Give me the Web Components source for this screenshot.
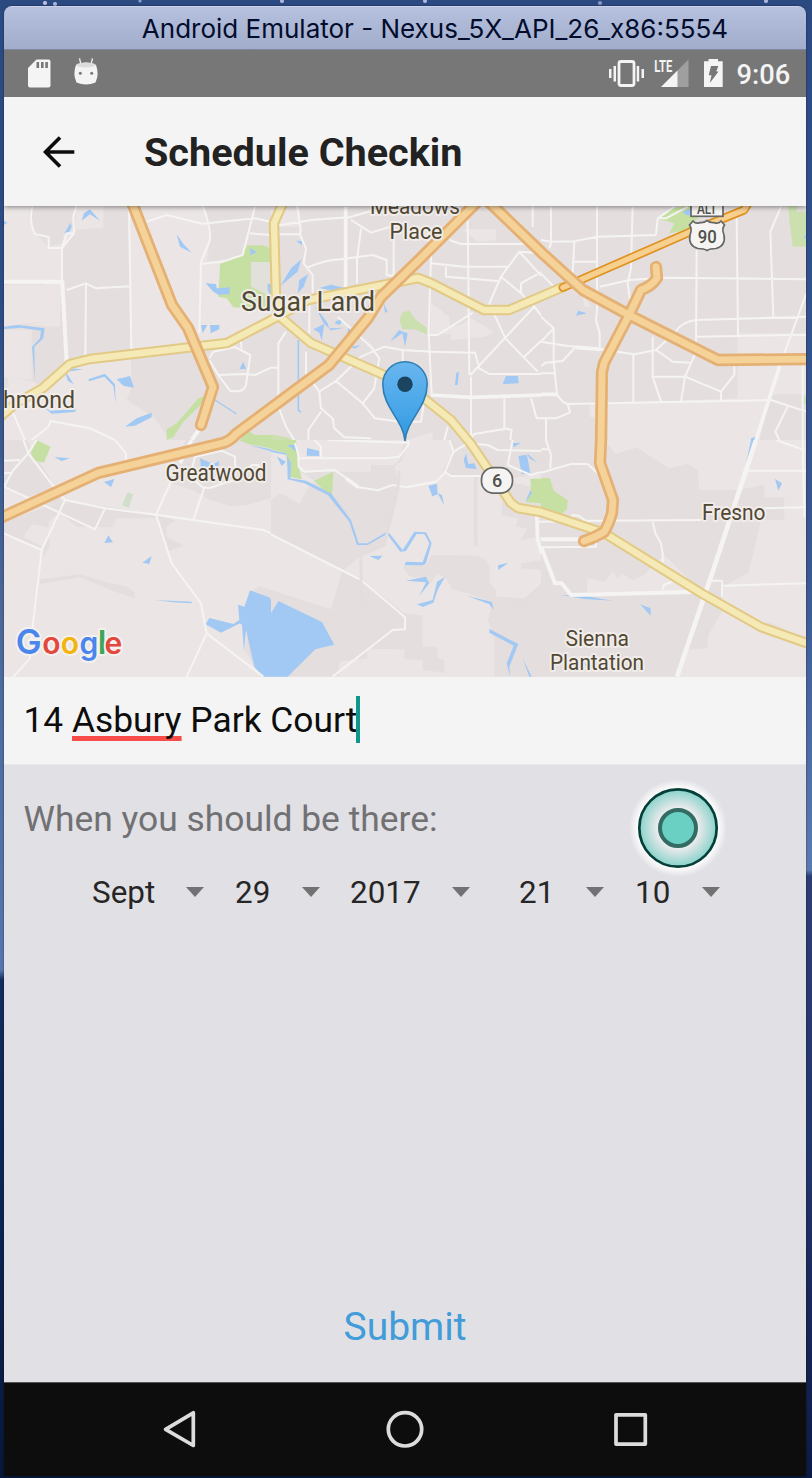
<!DOCTYPE html>
<html lang="en">
<head>
<meta charset="utf-8">
<title>Schedule Checkin</title>
<style>
html,body{margin:0;height:1478px;overflow:hidden}
body{font-family:Roboto,"Liberation Sans",sans-serif}
</style>
</head>
<body>
<emulator-desktop>
  <emulator-window label="Android Emulator - Nexus_5X_API_26_x86:5554">
    <status-bar time="9:06"></status-bar>
    <app-header>Schedule Checkin</app-header>
    <location-map></location-map>
    <address-field><span>14</span> <u>Asbury</u> <span>Park Court</span></address-field>
    <checkin-form>
      <span slot="label">When you should be there:</span>
      <date-spinner style="width:112px">Sept</date-spinner>
      <date-spinner style="width:85px;margin-left:31px">29</date-spinner>
      <date-spinner style="width:120px;margin-left:30px">2017</date-spinner>
      <date-spinner style="width:85px;margin-left:49px">21</date-spinner>
      <date-spinner style="width:85px;margin-left:31px">10</date-spinner>
      <span slot="action">Submit</span>
    </checkin-form>
    <nav-bar></nav-bar>
  </emulator-window>
</emulator-desktop>
<script>
function define(name, html, setup) {
  customElements.define(name, class extends HTMLElement {
    constructor() {
      super();
      this.attachShadow({mode: 'open'}).innerHTML = html;
    }
    connectedCallback() { if (setup) setup(this, this.shadowRoot); }
  });
}

define('emulator-desktop', `<style>
:host{display:block;box-sizing:border-box;width:812px;height:1478px;padding:6px 6px 2px 4px;
background:
radial-gradient(circle at 45px 3px,#c0bfe0 0 1.5px,transparent 2.5px),
radial-gradient(circle at 55px 4px,#b0b5dc 0 1.5px,transparent 2.5px),
radial-gradient(circle at 140px 1px,#8f9fd0 0 1px,transparent 2px),
radial-gradient(circle at 282px 1px,#b0b5dc 0 1.5px,transparent 2.5px),
radial-gradient(circle at 425px 1px,#b0b5dc 0 1.5px,transparent 2.5px),
radial-gradient(circle at 600px 3px,#8795c5 0 1.5px,transparent 2.5px),
radial-gradient(circle at 766px 1px,#b0b5dc 0 1.5px,transparent 2.5px),
linear-gradient(180deg,#2b4a82 0,#3a5790 560px,#5b7bb0 870px,#2c3d72 876px,#23366a 1150px,#0c1b42 1478px) right/10px 100% no-repeat,
linear-gradient(180deg,#2b4a82 0,#2d4c84 300px,#4b6798 600px,#5577ae 970px,#142c5e 980px,#0c2350 1250px,#08183a 1478px)}
</style><slot></slot>`);

define('emulator-window', `<style>
:host{display:flex;flex-direction:column;height:1470px;border-radius:8px 8px 0 0;overflow:hidden;box-shadow:0 0 2px rgba(0,0,20,.6)}
.title{box-sizing:border-box;height:44px;flex:none;background:linear-gradient(#b5c1de,#a1adca);border-top:1px solid #ccd3e6;border-bottom:1px solid #7c869f;
font:26px/44px Inter,sans-serif;letter-spacing:0;color:#020c2c;text-align:center;white-space:nowrap;padding-left:60px}
</style><div class="title"></div><slot></slot>`,
(host, root) => root.querySelector('.title').textContent = host.getAttribute('label'));

define('status-bar', `<style>
:host{display:flex;align-items:center;height:47px;flex:none;background:#777;color:#f4f4f4}
svg{display:block}
.time{font:500 27.3px/47px Roboto,sans-serif;margin:4px 0 0 13.500px}
</style>
<svg width="733" height="47" viewBox="4 50 719 47" preserveAspectRatio="none" style="width:719px">
<path fill="#f4f4f4" d="M36.500 59.500H48.500Q50.500 59.500 50.500 61.500V85.500Q50.500 87.500 48.500 87.500H30Q28 87.500 28 85.500V68Z"/>
<path fill="#777" d="M36.500 62h2.600v6h-2.600zM41 62h2.600v6H41zM45.300 62h2.600v6h-2.600z"/>
<path stroke="#f4f4f4" stroke-width="1.300" fill="none" d="M79.500 58.300l1.500 6M92.500 58.300l-1.500 6"/>
<path fill="#f4f4f4" d="M76 65Q86 60 96 65Q99.500 74 95.500 82.500Q86 86.500 76.500 82.500Q72.500 74 76 65Z"/>
<ellipse cx="86" cy="65" rx="9.700" ry="2.400" fill="#ddd"/>
<circle cx="80.300" cy="73.300" r="1.500" fill="#777"/><circle cx="91.700" cy="73.300" r="1.500" fill="#777"/>
<rect x="619" y="61.500" width="15" height="24" rx="2" fill="none" stroke="#f4f4f4" stroke-width="2.800"/>
<path fill="#f4f4f4" d="M609 69h2.500v9H609zM613.500 66h2.500v15.500h-2.500zM636.700 66h2.500v15.500h-2.500zM641.500 69h2.500v9h-2.500z"/>
<path fill="#9f9f9f" d="M688.500 59.500V87H661Z"/><path fill="#f4f4f4" d="M677.500 70.500V87H661Z"/>
<path d="M653 58H673.500V68L669.500 72H653Z" fill="#777"/>
<text x="654.300" y="71.500" font-family="Roboto" font-weight="700" font-size="16" textLength="18" lengthAdjust="spacingAndGlyphs" fill="#f4f4f4">LTE</text>
<path fill="#f4f4f4" d="M708.500 59h9.500v2.300h4.700V87H704V61.300h4.500Z"/>
<path fill="#777" d="M711 66h7.300l-2 5.500h2.300L709.800 83l1.700-7.800h-2.800Z"/>
</svg><div class="time"></div>`,
(host, root) => root.querySelector('.time').textContent = host.getAttribute('time'));

define('app-header', `<style>
:host{display:flex;align-items:center;height:109px;flex:none;background:#f4f4f4;color:#222;position:relative;z-index:2;box-shadow:0 1px 5px rgba(0,0,0,.45);clip-path:inset(0 0 -8px 0)}
svg{display:block;margin:0 69px 0 39px;flex:none}
div{font:700 39.600px/46px Roboto,sans-serif;margin-top:3px;white-space:nowrap}
</style>
<svg width="32" height="32" viewBox="43 135.500 32 32"><path d="M74.300 151.500H45.500M60 137L45.500 151.500L60 166" fill="none" stroke="#0c0c0c" stroke-width="3.600"/></svg>
<div><slot></slot></div>`);

define('location-map', `<style>
:host{display:block;height:471px;flex:none}
svg{display:block}
.urban{fill:#e4dfde}.park{fill:#c6e0a3}.water{fill:#a2c9f4}.land{fill:#ebe6e5}
.wl{fill:none;stroke:#a2c9f4;stroke-width:7}
.rd{fill:none;stroke:#f5f4f3;stroke-width:6;stroke-linejoin:round}
.labels text{font-family:Roboto,sans-serif;fill:#504833;stroke:#f3eeec;stroke-opacity:.9;stroke-width:4px;stroke-linejoin:round;paint-order:stroke}
</style>
<svg width="802" height="471" viewBox="4 206 802 471">
<defs>
<linearGradient id="pin" x1="0" y1="0" x2="0" y2="1"><stop offset="0" stop-color="#69b6ef"/><stop offset=".65" stop-color="#45a5e8"/><stop offset="1" stop-color="#2c96dd"/></linearGradient>
<path id="oa" d="M131 200L172 305L188 328L213 387L201 425M0 518L98 473L223 443Q230 441 236 434L271 408L329 365L368 318L381 297L424 255L478 201M487 200L542 253L574 282L583 290L629 315L718 360L812 359M656 267L657 278Q652 286 641 290L629 315L604 363L602 372L601 440L600 463L613 500L612 513Q609 524 604 532Q594 538 584 541"/>
<path id="ye" d="M0 417L15 404L43 388L70 364L90 359L227 343L279 316L308 300L418 278L431 283L484 310L509 310L563 287M283 203L274 223L276 297L279 316L311 343L384 375L426 400L451 420L471 444L511 503L518 508L541 512L604 533L701 593L761 627L812 645"/>
<path id="or" d="M563 287.500L690 232L744 210L750 200"/>
<clipPath id="tl"><path d="M0 0H814V721H0Z"/></clipPath>
</defs>
<rect x="4" y="206" width="802" height="471" fill="#ebe6e5"/>
<g transform="translate(0 200) scale(.33333)" clip-path="url(#tl)">
<path class="urban" d="M90 0H230L225 90L190 100V130L145 140L105 100L88 50ZM230 90L275 85L310 85V0H390V265L395 455L235 480L200 485L130 560L100 545L25 530V580L12 600V250H130L125 285L172 320L160 362L80 375L180 380L185 150ZM392 460L570 440L660 440L813 370V720H510L460 650L380 600L395 560ZM610 0H813V140L730 160L700 180L620 185L630 120Z"/>
<path class="land" d="M12 255H130L125 285L172 320L160 362L12 378ZM12 390H95V540L12 530Z"/>
<path class="park" d="M660 192L728 165L742 136H790L813 145V330L700 322L680 295L655 290ZM500 720V688L530 670L595 595L615 587L612 605L550 665L520 712ZM720 720L745 692L765 705H813V720Z"/>
<path fill="#e2e0da" d="M753 186H813V290L753 260Z"/>
<path class="water" d="M245 62L252 40L270 28L300 62L270 43ZM193 100L212 68L215 80L205 103ZM530 103L551 133L575 158L540 140ZM617 250L648 252L650 265L690 262L688 283L655 284L640 275ZM603 375H622L608 400ZM630 375H658V388L632 400ZM719 507L729 485L739 507ZM750 143L770 157L751 166ZM803 250L813 255V290L803 270ZM194 510L221 553L203 542ZM350 538L390 528L402 563L370 557ZM375 680L410 655L455 638V652L405 677ZM12 62L22 69L12 74ZM12 380L55 375L134 385L130 415L103 440L105 545L96 440L120 415L123 392L65 383L12 387ZM265 538L315 521L345 553L347 610L340 558L313 530L268 544ZM205 505L250 508L210 514ZM105 600L150 632L228 628L234 615L225 636L155 641Z"/>
<path class="wl" style="stroke-width:4" d="M645 600L710 642"/>
<path class="rd" d="M98 15Q85 60 105 102L146 111V144H186L222 100L220 50L230 15M186 144V240M222 100H200L187 140M200 270L258 250L288 265L390 259M258 250L256 470M387 20L394 455M440 65L500 45L607 71L765 55L813 66M607 15Q632 75 630 120L603 185L598 400M603 192L670 184L728 165L765 20M750 100L813 105M628 475L640 455L705 441L751 465L738 555Q731 580 690 572L655 525L628 480M655 525L735 522L765 525L813 503M720 400L725 445M12 635L95 610M35 630L75 720M95 720L145 680L152 663L270 685L345 720"/>
<path class="rd" style="stroke-width:12" d="M12 245H187L200 490M603 680L575 720"/>
</g>
<g transform="translate(271 200) scale(.33333)" clip-path="url(#tl)">
<path class="urban" d="M0 0H813V720H0Z"/>
<path class="land" d="M575 88H675V120L620 125ZM480 310L535 350V380L570 375L600 355L668 395L640 410L540 420V400L478 405ZM410 720L485 697V720ZM0 30H85V80H0Z"/>
<path class="park" fill-opacity=".8" d="M385 360L395 337L415 332L430 355L468 385V403L430 388H395ZM0 703L60 715V720H0Z"/>
<path class="water" d="M75 122L93 123V136ZM28 258L60 205L91 178L80 215ZM80 280L85 240L112 222L98 260ZM145 264L180 254L218 263L188 272ZM127 388L160 372L152 422L145 398ZM190 370L200 361L217 360L205 375ZM357 425L383 391L410 400L402 440L394 400ZM552 555L556 518L564 516L560 555ZM705 528H741L743 550L695 552ZM225 415L233 383L245 390L232 418ZM338 310L350 335L342 338ZM130 315L170 370L175 385L222 383L180 391L158 370ZM240 440L270 436L250 446Z"/>
<path class="wl" style="stroke-width:5" d="M82 420V630L90 637"/>
<path class="rd" d="M0 80L120 60L235 52L310 30M78 15L88 80V107L105 145L98 190L125 225V290M0 103H85M240 60L300 98L360 80M270 85L258 180V250M105 205Q160 180 210 178L305 165L347 180V225L368 228V80M480 190L580 200H710M525 200V230L680 243M535 120L570 132H740L780 130M590 60L595 525M470 100L480 170L473 400L482 585M115 300V400M45 395L22 430V620L45 680L70 720M0 503H22M105 455V520L145 575L150 625L190 660M145 575L195 543L240 500L270 470L340 440L395 450L480 455L612 458L625 505L655 522H813M200 350L300 440L325 475L318 515L310 565L275 610M195 543L275 610L312 655L385 665L450 665L460 600M185 655L190 685L220 712L300 715M473 405H500L605 338M813 160L745 155L690 230L655 310L703 415L800 515M745 155L813 230M813 215L750 250V280L790 320L598 525M790 320L813 350M690 230L750 280M760 470L813 420M785 0V80M700 595V685L722 690L718 720M700 687L610 702L595 720M780 595L797 655H813M600 530V720M112 720V690L150 635M395 450V490M530 680L520 720"/>
<path class="rd" style="stroke-width:11" d="M224 20V262M480 585L600 592L813 585"/>
</g>
<g transform="translate(541 200) scale(.33333)" clip-path="url(#tl)">
<path class="urban" d="M0 0H796V400H590V595L200 610V720H0Z"/><path class="land" d="M125 280L150 320H130ZM145 615H170V650H145Z"/>
<path class="urban" d="M690 583H796V720H655Z"/>
<path class="park" d="M345 55L395 25L450 15L500 20L440 90L385 100L400 70Z"/><path class="park" fill-opacity=".8" d="M742 18H770L765 35H796V140H755L745 60ZM788 590H796V612H788Z"/>
<path class="water" d="M425 35L450 25V48L435 45ZM105 347L112 332L138 340ZM788 115L796 100V115ZM630 715L642 710V720H630Z"/>
<path class="rd" d="M30 20V130L25 145M0 120L30 125L100 124L170 110L345 105M100 124L95 220M95 185H170M168 20V330L165 360L176 400V450M275 20L270 205L260 250L267 300M345 105L350 55L400 20M350 55H375L440 20M176 260L265 240L365 233L796 238M0 220L40 262M0 350L38 385V480L48 585L65 605L80 612L275 608L690 600L796 635M38 385L0 425M0 425L80 438L110 440L180 448L280 463L345 450L400 400Q420 365 465 360L796 350M0 498L15 488L65 483L105 440M0 520H45M80 612L87 637L45 655H0M15 655V720M277 463V605M335 410V530L360 605M345 450L395 485L450 488M335 530H432L540 575L580 525V485M540 575V600M470 445L432 530L420 605M467 150L465 425M465 410L740 405L796 405M587 50L591 405M720 20L688 95L697 350M796 280L730 460M740 620L703 695L715 720M785 490V720"/>
<path class="rd" style="stroke-width:11" d="M725 470L645 720M0 583H45M105 442L180 448"/>
</g>
<g transform="translate(0 440) scale(.33333)" clip-path="url(#tl)">
<path class="urban" d="M12 0H80L165 140H200L110 190L130 200L195 180L450 220L525 240L500 260V290L552 317L507 333L475 235L350 235L335 262L230 260L180 220L145 245L150 320L130 350V328L12 285V245L180 185V160L140 150L75 175L12 140ZM120 418L240 403L340 432Q380 432 405 458V475L330 450L240 412L120 432ZM700 0H813V175L740 195L690 198L630 180L580 150L510 130L520 60L560 0ZM735 630L760 450L780 438L813 450V710H780ZM30 85L95 80L85 108Z"/>
<path class="land" d="M95 253L165 265L125 320L70 290Z"/>
<path class="park" d="M92 38L110 0L152 20L132 68L105 62ZM715 0H813V25L745 12Z"/><path class="park" style="fill:#cfdfc9" d="M366 196L383 157L400 163L386 203Z"/>
<path class="water" d="M163 51L210 55L185 63ZM312 126L344 116L333 142ZM313 309L325 286L339 307ZM427 368L455 348L448 372ZM600 55L640 72L658 62L655 82H603ZM617 553L628 534L700 552L718 540L714 494L733 500L750 451L808 472L813 480V710H790L763 680L738 570L732 635L726 555L720 550L663 578ZM465 480L575 485V490L520 487ZM745 15L813 28V34Z"/>
<path class="rd" d="M70 0L85 40L165 145L195 180M85 40L40 90L12 140L140 200L285 268L315 205M12 62L60 60M12 100L35 98M85 40L110 0M195 180L315 205L468 224L580 240L790 270L813 280M195 180L125 330L98 560L90 655L40 710M12 280L125 330M345 0L378 40V60M515 120L468 224L515 370L603 490L620 580L560 710M620 580L790 710M580 240L612 145L570 110L585 50L665 32L705 50V120L655 135Q620 150 612 140M735 100L755 75H775L790 110"/>
<path class="rd" style="stroke-width:11" d="M575 0L540 70"/>
</g>
<g transform="translate(271 440) scale(.33333)" clip-path="url(#tl)">
<path class="urban" d="M0 0H410L395 60L370 80L385 130L350 260L340 315L285 345L268 500V415L375 500L400 520L455 525V620H500V650L520 660V700L510 683L455 690V660H400V628H290V655L205 665V710H0V450L180 508L213 395L0 280V180L30 160L85 192L110 145L130 122L90 95H300V75H370L385 60L400 0ZM530 0H813V150L760 135L620 110V320L608 318V110L530 105L515 90L550 30ZM480 345L620 347L645 360L655 380L657 430L675 450V470L760 475L813 430V710H670V600L650 540L665 490L590 460L545 450L525 415L500 400L480 430L410 405L395 380L470 370ZM690 225L740 235L735 260L770 265L750 300L813 290V360L750 370V385L813 390V100L700 120Z"/>
<path class="land" d="M0 283L213 395L270 345L360 320L400 335L395 380L440 450L525 415L545 450L590 460L665 490L650 540L670 600L650 710H205V665L290 655V628H400L455 625L455 525L400 520L280 415L213 395L0 290ZM395 50L420 30L435 0L490 15V80L460 110H400Z"/>
<path class="urban" d="M370 545L450 525L455 620H500V655L520 660V698L455 690V660L400 658V628L290 625L330 600Z"/>
<path class="park" d="M0 0H75L80 60L92 118L55 110L45 40L0 28ZM130 122L187 95L183 167L160 152ZM778 116H813V190L765 186L780 150Z"/>
<path class="water" d="M0 30L45 40L60 70L58 115L105 122L180 160L240 240L263 310L290 310L350 274L395 330L430 275L465 277L482 310L465 370L455 376L400 376L405 365L455 367L475 310L460 282L437 282L405 333L388 335L348 282L290 315L258 315L235 245L170 165L100 130L50 118L48 45L0 36ZM18 50L45 65L32 78ZM108 24L144 32L145 48L107 47ZM48 15H77V35ZM472 137L498 131L500 163L484 169ZM500 160L513 165L519 195ZM578 60L585 40L592 72L610 70L617 88L585 84ZM742 48L768 44L778 100L752 102ZM725 10L750 8L728 22ZM295 348L335 347L322 360ZM405 422L465 410L475 430L445 468L465 427ZM485 480L498 425L522 411L500 450L487 488L455 501L438 493ZM681 376L712 368L682 390ZM588 467L663 486L668 510L655 493ZM655 567L742 612L715 680L717 710L707 670L728 617L655 578ZM755 655L782 710H775ZM768 40L800 68L775 55ZM0 520L22 483L153 546L190 614L133 628L65 695L50 710H0ZM762 188L778 150L783 158Z"/>
<path class="rd" d="M72 10L82 45L83 80L100 95L190 90L235 120L262 142L320 151L365 135L405 142L495 125L520 100L548 35L535 0M83 55L345 55L385 50L412 15V0M130 0L150 20V50M170 0L410 8M548 35L590 10L650 15L680 30L813 33M520 95L540 108H630M725 0L710 75L780 105L813 95M0 283L270 420L402 532V568L365 570L185 710M800 245H813"/>
<path fill="none" stroke="#e3dedc" stroke-width="9" d="M385 90L380 150L340 315L270 345V500M725 495L760 485L813 435"/>
<path class="rd" style="stroke-width:11" d="M797 220L800 300L813 340M225 115L262 142"/>
</g>
<g transform="translate(541 440) scale(.33333)" clip-path="url(#tl)">
<path class="urban" d="M0 0H190L225 42L285 22L385 85L440 72L470 90L475 150H590L670 135V170L780 175V240H660L620 410L545 440V510L500 590V625L440 630L410 710H0ZM670 550L705 545L730 560L750 535H796V600Z"/>
<path class="land" d="M138 415L190 425L215 395L230 415L242 400L275 420L305 408L370 345L480 455L138 455ZM545 440L620 400L796 390V600L545 480ZM730 145L780 110V240H730Z"/>
<path class="park" d="M0 114H27L38 152L80 180L78 208L62 222L0 205Z"/>
<path class="water" d="M613 80L630 0H640L622 70ZM702 117L723 130L712 152ZM297 493L329 505V527ZM58 465L130 467L215 482L130 477ZM125 668L165 678L145 688Z"/>
<path class="rd" d="M15 0L30 45L28 85M0 28H25M0 98L90 72H140L170 100M0 245L90 243L480 240M90 243L95 225L115 228L145 250M0 322L165 320V290M335 245L343 280L360 310L365 340V365M365 450L368 435L430 410M620 92H796M670 205L796 202M705 0L790 30M785 0L790 230M545 437L796 430M500 422H543V470"/>
<path class="rd" style="stroke-width:14" d="M645 0L520 380L408 710"/>
<path class="rd" style="stroke-width:12" d="M0 298H130M0 320L42 430H62L90 465L480 455"/>
</g>
<g fill="none" stroke-linejoin="round" stroke-linecap="round">
<use href="#ye" stroke="#e2ca86" stroke-width="10.500"/><use href="#ye" stroke="#f5e9b6" stroke-width="6.400"/>
<use href="#or" stroke="#df921f" stroke-width="9"/><use href="#or" stroke="#f7d08f" stroke-width="5.600"/>
<use href="#oa" stroke="#e5b073" stroke-width="12.300"/><use href="#oa" stroke="#f4d298" stroke-width="6.800"/>
</g>
<g fill="#f5f4f3" stroke="#666865" stroke-width="1.700">
<rect x="691" y="198" width="32" height="18.300"/>
<path d="M693 221Q696 224.500 700 222.500Q704 223 707 220.500Q710 223 714 222.500Q718 224.500 721 221L724.500 225Q721.500 229 724 235Q726 246 716 248.500Q710 248.500 707 250.500Q704 248.500 698 248.500Q688 246 690 235Q692.500 229 689.500 225Z"/>
<rect x="481.500" y="467.700" width="31" height="25.500" rx="12"/>
</g>
<g font-family="Roboto" font-weight="500" fill="#50504c" text-anchor="middle"><text x="707" y="213.500" font-size="14" textLength="20" lengthAdjust="spacingAndGlyphs">ALT</text><text x="707.300" y="243" font-size="18.500" textLength="19" lengthAdjust="spacingAndGlyphs">90</text><text x="497" y="487" font-size="18">6</text></g>
<g class="labels">
<text x="370" y="213.500" font-size="22.500" textLength="90" lengthAdjust="spacingAndGlyphs">Meadows</text>
<text x="389.500" y="238.500" font-size="22.500" textLength="53" lengthAdjust="spacingAndGlyphs">Place</text>
<text x="241" y="311" font-size="28" textLength="134" lengthAdjust="spacingAndGlyphs">Sugar Land</text>
<text x="3" y="408" font-size="24" textLength="72" lengthAdjust="spacingAndGlyphs">hmond</text>
<text x="165.500" y="480.500" font-size="23.500" textLength="101" lengthAdjust="spacingAndGlyphs">Greatwood</text>
<text x="702" y="519.500" font-size="22.500" textLength="63.500" lengthAdjust="spacingAndGlyphs">Fresno</text>
<text x="565.500" y="645.500" font-size="22.500" textLength="63.500" lengthAdjust="spacingAndGlyphs">Sienna</text>
<text x="550" y="670" font-size="22.500" textLength="94" lengthAdjust="spacingAndGlyphs">Plantation</text>
</g>
<path d="M405 441C403 419 382.800 408 382.800 384A22.200 22.200 0 0 1 427.200 384C427.200 408 407 419 405 441Z" fill="url(#pin)" stroke="#2e7eb3" stroke-width="1.600"/>
<circle cx="405" cy="384.300" r="7.700" fill="#1b4461"/>
<text y="654" font-family="Inter" font-weight="600" font-size="33" stroke="#f4f1ef" stroke-width="4" stroke-linejoin="round" paint-order="stroke"><tspan x="15.800" fill="#4a86ec" font-size="34.500">G</tspan><tspan x="42.200" fill="#e2493c" font-size="30">o</tspan><tspan x="60.800" fill="#f2b50e" font-size="30">o</tspan><tspan x="79.500" fill="#4a86ec" font-size="30">g</tspan><tspan x="97.700" fill="#3ea657">l</tspan><tspan x="104.500" fill="#e2493c" font-size="30">e</tspan></text>
</svg>`);

define('address-field', `<style>
:host{display:flex;align-items:center;box-sizing:border-box;height:88px;flex:none;background:#f4f4f4;border-bottom:1px solid #e8e8ea;padding-left:19.500px;color:#0d0d0d}
.text{font:35.350px/47px Roboto,sans-serif;white-space:pre}
::slotted(u){text-decoration:underline #f84c49 5px;text-underline-offset:4px;text-decoration-skip-ink:none}
i{width:4px;height:47px;background:#10968a;margin:-2px 0 0 -1px}
</style><div class="text"><slot></slot></div><i></i>`);

define('date-spinner', `<style>
:host{display:flex;align-items:center;justify-content:space-between;color:#262626;font:31.400px/40px Roboto,sans-serif}
i{border:solid transparent;border-width:10px 9.500px 0;border-top-color:#727274;margin-top:-3px}
</style><slot></slot><i></i>`);

define('checkin-form', `<style>
:host{display:flex;flex-direction:column;box-sizing:border-box;height:617px;flex:none;background:#e1e0e5;position:relative}
.label{font:35.400px/44px Roboto,sans-serif;color:#717174;padding:32px 0 0 19.500px}
.row{display:flex;padding:32px 0 0 88px}
.action{margin-top:auto;font:39px/48px Roboto,sans-serif;color:#419cd9;text-align:center;padding-bottom:31px}
.touch{position:absolute;left:626px;top:15px}
</style>
<div class="label"><slot name="label"></slot></div>
<div class="row"><slot></slot></div>
<div class="action"><slot name="action"></slot></div>
<svg class="touch" width="96" height="96" viewBox="-48 -48 96 96">
<defs><radialGradient id="h"><stop offset=".8" stop-color="#fff"/><stop offset=".9" stop-color="#fff" stop-opacity=".5"/><stop offset="1" stop-color="#fff" stop-opacity="0"/></radialGradient>
<radialGradient id="f"><stop offset=".5" stop-color="#eeeef1"/><stop offset=".65" stop-color="#d2e3e3"/><stop offset="1" stop-color="#88d3ca"/></radialGradient></defs>
<circle r="49" fill="url(#h)"/><circle r="38.700" fill="url(#f)" stroke="#053f39" stroke-width="2.700"/>
<circle r="18" fill="#6ad0c4" stroke="#346b62" stroke-width="4"/></svg>`);

define('nav-bar', `<style>
:host{display:block;height:94px;flex:none;background:#0d0d0d;border-top:1px solid #555;box-sizing:border-box}
svg{display:block}
</style>
<svg width="802" height="93" viewBox="4 1383 802 93" fill="none" stroke="#dcdcdc" stroke-width="3.700" stroke-linejoin="round">
<path d="M193.300 1412.800V1445.500L165.600 1429.300Z"/><circle cx="405" cy="1429.300" r="16.700"/><rect x="616" y="1414.800" width="29.300" height="29.300"/></svg>`);
</script>
</body>
</html>
